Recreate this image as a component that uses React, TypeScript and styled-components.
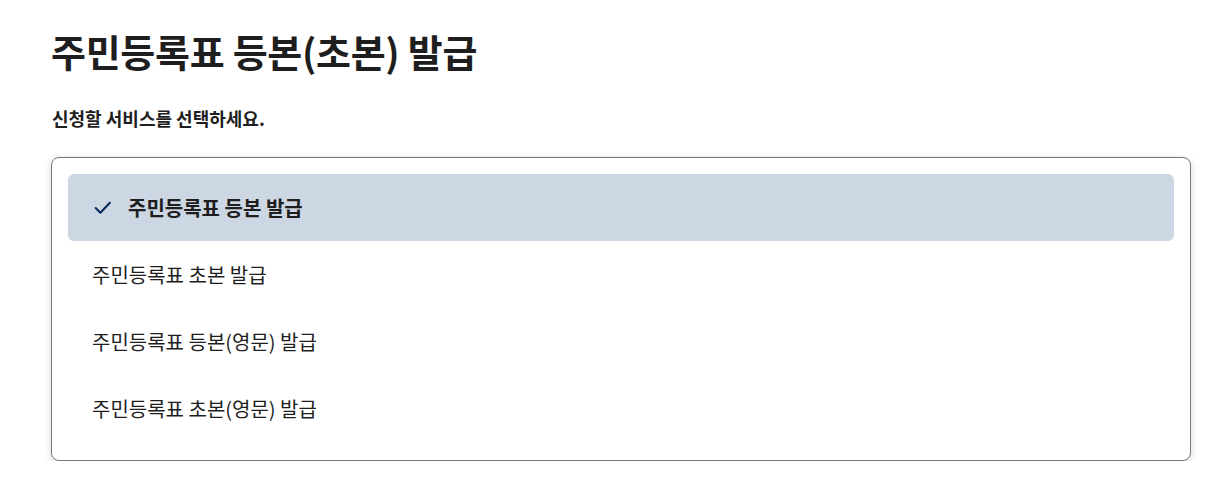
import styled, { createGlobalStyle } from "styled-components";

const GlobalStyle = createGlobalStyle`
    html, body {
        margin: 0;
        padding: 0;
        background: #ffffff;
    }
    body {
        font-family: "Noto Sans CJK KR", "Noto Sans", sans-serif;
        color: #1e1e1e;
    }
`;

const Page = styled.main`
    padding: 22px 15px 0 51px;
    width: 1140px;
`;

const Title = styled.h1`
    margin: 0;
    font-size: 38px;
    font-weight: 700;
    line-height: 58px;
    letter-spacing: -0.3px;
    color: #1e1e1e;
`;

const Lead = styled.p`
    margin: 25px 0 0 1px;
    font-size: 18px;
    font-weight: 700;
    line-height: 26px;
    color: #1e1e1e;
`;

const OptionList = styled.ul`
    list-style: none;
    margin: 26px 0 0;
    padding: 16px 16px 18px;
    display: flex;
    flex-direction: column;
    border: 1px solid #767676;
    border-radius: 8px;
    box-shadow: 0 2px 8px rgba(0, 0, 0, 0.14);
    background: #fff;
`;

const Option = styled.li<{ $selected?: boolean }>`
    display: flex;
    align-items: center;
    gap: 15px;
    height: 67px;
    padding: 0 24px;
    border-radius: 6px;
    font-size: 20px;
    font-weight: ${(p) => (p.$selected ? 700 : 400)};
    background: ${(p) => (p.$selected ? "#cdd7e3" : "transparent")};
    color: #1e1e1e;
    cursor: pointer;
`;

const Check = () => (
    <svg width="21" height="21" viewBox="0 0 20 20" fill="none">
        <path
            d="M3.5 10.5 L8 15 L17 5.5"
            stroke="#0b2c5a"
            strokeWidth="2"
            strokeLinecap="round"
            strokeLinejoin="round"
        />
    </svg>
);

const options = [
    "주민등록표 등본 발급",
    "주민등록표 초본 발급",
    "주민등록표 등본(영문) 발급",
    "주민등록표 초본(영문) 발급",
];

export default function App() {
    const selected = 0;
    return (
        <>
            <GlobalStyle />
            <Page>
                <Title>주민등록표 등본(초본) 발급</Title>
                <Lead>신청할 서비스를 선택하세요.</Lead>
                <OptionList>
                    {options.map((label, i) => (
                        <Option key={label} $selected={i === selected}>
                            {i === selected && <Check />}
                            {label}
                        </Option>
                    ))}
                </OptionList>
            </Page>
        </>
    );
}
